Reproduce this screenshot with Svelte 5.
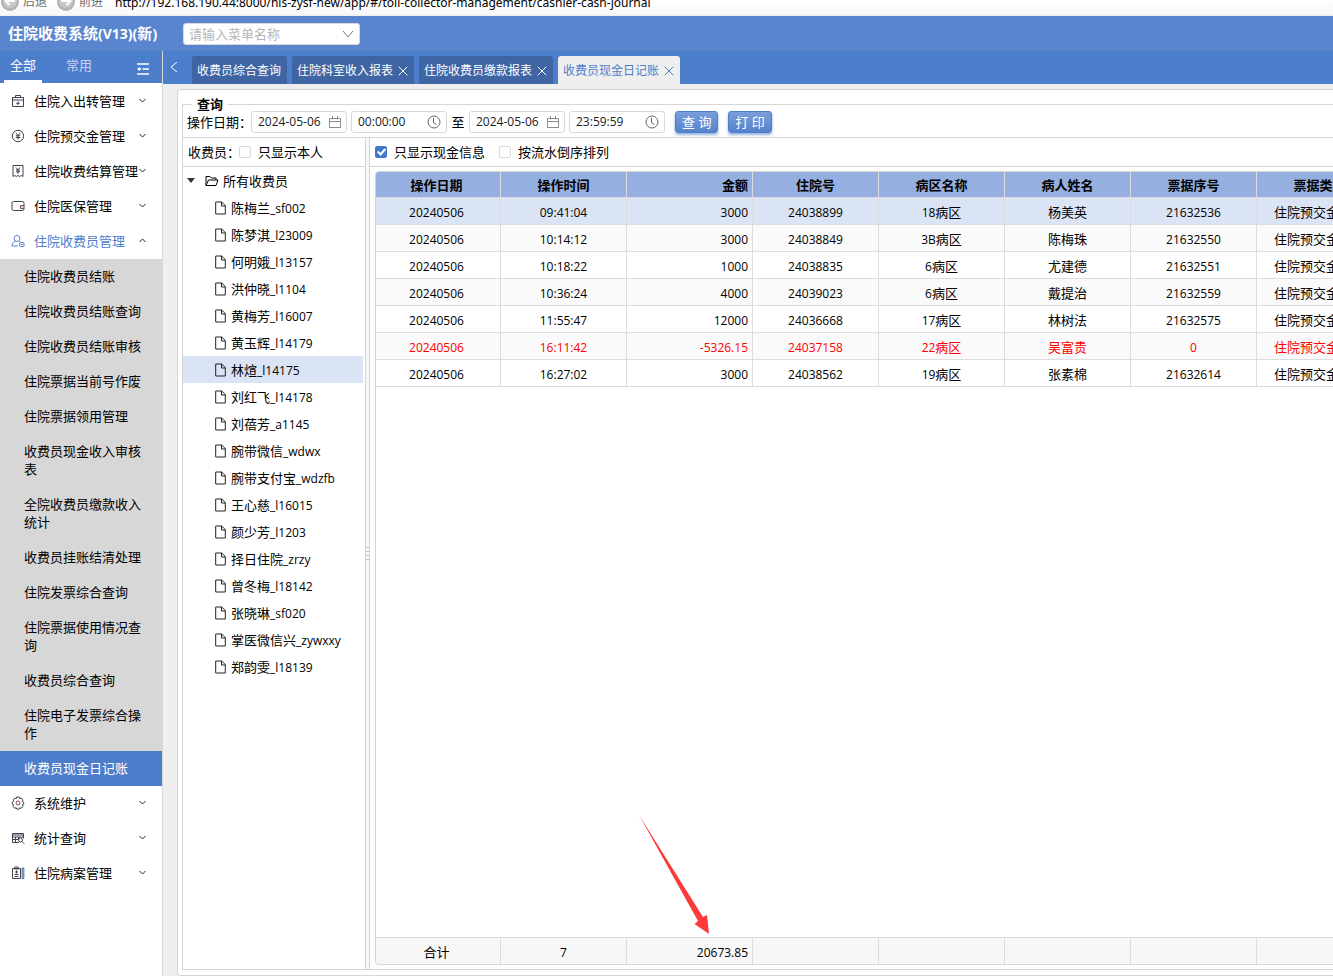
<script>
  const groups = [
    { icon: 'case', label: '住院入出转管理' },
    { icon: 'coin', label: '住院预交金管理' },
    { icon: 'receipt', label: '住院收费结算管理' },
    { icon: 'wallet', label: '住院医保管理' },
    {
      icon: 'user',
      label: '住院收费员管理',
      open: true,
      children: [
        '住院收费员结账',
        '住院收费员结账查询',
        '住院收费员结账审核',
        '住院票据当前号作废',
        '住院票据领用管理',
        '收费员现金收入审核表',
        '全院收费员缴款收入统计',
        '收费员挂账结清处理',
        '住院发票综合查询',
        '住院票据使用情况查询',
        '收费员综合查询',
        '住院电子发票综合操作',
        '收费员现金日记账'
      ]
    },
    { icon: 'gear', label: '系统维护' },
    { icon: 'stats', label: '统计查询' },
    { icon: 'record', label: '住院病案管理' }
  ];

  const tabs = [
    { label: '收费员综合查询', closable: false },
    { label: '住院科室收入报表', closable: true },
    { label: '住院收费员缴款报表', closable: true },
    { label: '收费员现金日记账', closable: true }
  ];

  const collectors = [
    '陈梅兰_sf002', '陈梦淇_l23009', '何明娥_l13157', '洪仲晓_l1104', '黄梅芳_l16007',
    '黄玉辉_l14179', '林煊_l14175', '刘红飞_l14178', '刘蓓芳_a1145', '腕带微信_wdwx',
    '腕带支付宝_wdzfb', '王心慈_l16015', '颜少芳_l1203', '择日住院_zrzy', '曾冬梅_l18142',
    '张晓琳_sf020', '掌医微信兴_zywxxy', '郑韵雯_l18139'
  ];

  const columns = ['操作日期', '操作时间', '金额', '住院号', '病区名称', '病人姓名', '票据序号', '票据类型'];
  const rows = [
    ['20240506', '09:41:04', '3000', '24038899', '18病区', '杨美英', '21632536', '住院预交金收据'],
    ['20240506', '10:14:12', '3000', '24038849', '3B病区', '陈梅珠', '21632550', '住院预交金收据'],
    ['20240506', '10:18:22', '1000', '24038835', '6病区', '尤建德', '21632551', '住院预交金收据'],
    ['20240506', '10:36:24', '4000', '24039023', '6病区', '戴提治', '21632559', '住院预交金收据'],
    ['20240506', '11:55:47', '12000', '24036668', '17病区', '林树法', '21632575', '住院预交金收据'],
    ['20240506', '16:11:42', '-5326.15', '24037158', '22病区', '吴富贵', '0', '住院预交金收据'],
    ['20240506', '16:27:02', '3000', '24038562', '19病区', '张素棉', '21632614', '住院预交金收据']
  ];
  const totals = ['合计', '7', '20673.85', '', '', '', '', ''];

  let activeItem = $state('收费员现金日记账');
  let activeTab = $state('收费员现金日记账');
  let selected = $state('林煊_l14175');
  let onlySelf = $state(false);
  let onlyCash = $state(true);
  let reverse = $state(false);

  // Separates Latin runs from Chinese runs so each gets its own size
  const runs = (text) => text.match(/[\x00-\x7f]+|[^\x00-\x7f]+/g) ?? [];
  const isLatin = (run) => run.charCodeAt(0) < 128;
</script>

{#snippet mixed(text)}{#each runs(text) as run}{#if isLatin(run)}<span class="latin">{run}</span>{:else}{run}{/if}{/each}{/snippet}

{#snippet calendar()}
  <svg class="field-icon" width="12" height="12" viewBox="0 0 12 12"><path d="M.5 2.5h11v9H.5zM.5 5.5h11M3.5 0v3.5M8.500 0v3.5" /></svg>
{/snippet}

{#snippet clock()}
  <svg class="field-icon dark" width="14" height="14" viewBox="0 0 14 14"><circle cx="7" cy="7" r="6" /><path d="M6.500 3v4.500l3 2" /></svg>
{/snippet}

{#snippet close()}
  <svg width="10" height="10" viewBox="0 0 10 10"><path d="M.7.7l8.600 8.600M9.300.7L.7 9.300" /></svg>
{/snippet}

{#snippet menuIcon(name)}
  <svg class="menu-icon" width="14" height="14" viewBox="0 0 14 14">
    {#if name === 'case'}
      <path d="M1.500 3.500h11v9h-11zM1.500 6h11M4.500 3.500v-2h5v2M7 7.500v3.500M5.300 9.300h3.400" />
    {:else if name === 'coin'}
      <circle cx="7" cy="7" r="5.700" /><path d="M4.800 4L7 6.500 9.200 4M4.800 6.800h4.400M4.800 8.500h4.400M7 6.500v4" />
    {:else if name === 'receipt'}
      <path d="M2 12.500V1.500h10v11l-1.700-1-1.600 1-1.700-1-1.700 1-1.600-1zM5 3.500l2 2.300 2-2.300M5 6h4M5 7.800h4M7 5.800v4" />
    {:else if name === 'wallet'}
      <rect x="1" y="2.500" width="12" height="9" rx="1.500" /><path class="warm" d="M13 6.500H9.500v3H13M10.500 8h1" />
    {:else if name === 'user'}
      <circle cx="6" cy="4.500" r="3" /><path d="M4.300 7.200C2 8 1.200 9.500 1 12h6M8 6.800l1.300 1" /><rect x="8.500" y="8.500" width="4.500" height="4" rx="1" /><path d="M9.500 10.500h2.500" />
    {:else if name === 'gear'}
      <path d="M5.700 1h2.600l.4 1.600 1.600-.5 1.700 1.900-.8 1.500 1.500.7v2l-1.500.7.8 1.500-1.800 1.900-1.500-.6-.5 1.400H5.700l-.5-1.400-1.500.6L2 10.400l.7-1.500-1.400-.7v-2l1.400-.7L2 4l1.700-1.900 1.600.5z" /><circle class="warm" cx="7" cy="7" r="2" />
    {:else if name === 'stats'}
      <path d="M8 11.500H1.500v-9h11v5M1.500 4h11M1.500 6h11M1.500 8.500H8M4.500 6v5.500M7.500 6v3" /><circle cx="9.500" cy="9" r="2" /><path d="M11 10.500l2.300 2.300" />
    {:else}
      <path d="M1.500 2.500h8v10h-8zM3.800 1h3.500v2H3.800zM5.500 4.500v3M4 6h3M3.500 8.500h4M3.500 10.500h4" /><path class="blue" d="M11.200 2h1.600v10.500h-1.600z" />
    {/if}
  </svg>
{/snippet}

<div class="app">
  <div class="browser">
    <svg width="20" height="12" viewBox="0 0 20 12"><circle cx="10" cy="2" r="9" fill="#b4b4b4" /><circle cx="10" cy="1" r="7" fill="#c9c9c9" /><path d="M15 1H6M9.500-3L5.500 1l4 4" fill="none" stroke="#fff" stroke-width="2" /></svg>
    <span class="nav-text">后退</span>
    <svg width="20" height="12" viewBox="0 0 20 12"><circle cx="10" cy="2" r="9" fill="#b4b4b4" /><circle cx="10" cy="1" r="7" fill="#c9c9c9" /><path d="M5 1h9M10.500-3l4 4-4 4" fill="none" stroke="#fff" stroke-width="2" /></svg>
    <span class="nav-text">前进</span>
    <span class="url">http://192.168.190.44:8000/his-zysf-new/app/#/toll-collector-management/cashier-cash-journal</span>
  </div>

  <header>
    <h1>{@render mixed('住院收费系统(V13)(新)')}</h1>
    <label class="search">
      <input type="text" placeholder="请输入菜单名称" aria-label="请输入菜单名称" />
      <svg width="12" height="8" viewBox="0 0 12 8"><path d="M1 1l5 6 5-6" /></svg>
    </label>
  </header>

  <div class="body">
    <aside>
      <div class="side-tabs">
        <button class="on">全部</button>
        <button>常用</button>
        <button class="fold" aria-label="折叠">
          <svg width="14" height="14" viewBox="0 0 14 14"><path d="M1 2h12M6.500 7H13M1 12h12M2 7h3" /><path class="tip" d="M1 7l3-2v4z" /></svg>
        </button>
      </div>
      <nav>
        {#each groups as group}
          <button class="group" class:open={group.open}>
            {@render menuIcon(group.icon)}
            <span>{group.label}</span>
            <svg class="chevron" width="7" height="5" viewBox="0 0 7 5"><path d={group.open ? 'M.5 4l3-3 3 3' : 'M.5 1l3 3 3-3'} /></svg>
          </button>
          {#if group.children}
            <div class="children">
              {#each group.children as child}
                <button class:active={child === activeItem} onclick={() => (activeItem = child)}>{child}</button>
              {/each}
            </div>
          {/if}
        {/each}
      </nav>
    </aside>

    <main>
      <div class="tabs">
        <button class="back" aria-label="向左"><svg width="8" height="10" viewBox="0 0 8 10"><path d="M7 0L1 5l6 5" /></svg></button>
        {#each tabs as tab}
          <button class="tab" class:current={tab.label === activeTab} onclick={() => (activeTab = tab.label)}>
            {tab.label}{#if tab.closable}{@render close()}{/if}
          </button>
        {/each}
      </div>

      <div class="panel">
        <div class="frame">
          <fieldset>
            <legend>查询</legend>
            <div class="query">
              <label for="from-date">操作日期：</label>
              <span class="field"><input id="from-date" type="text" value="2024-05-06" />{@render calendar()}</span>
              <span class="field"><input type="text" value="00:00:00" aria-label="开始时间" />{@render clock()}</span>
              <span class="to">至</span>
              <span class="field"><input type="text" value="2024-05-06" aria-label="结束日期" />{@render calendar()}</span>
              <span class="field"><input type="text" value="23:59:59" aria-label="结束时间" />{@render clock()}</span>
              <button class="action">查 询</button>
              <button class="action">打 印</button>
            </div>
          </fieldset>

          <div class="split">
            <section class="left">
              <div class="options">
                <span>收费员：</span>
                <label><input type="checkbox" bind:checked={onlySelf} />只显示本人</label>
              </div>
              <div class="tree">
                <div class="root">
                  <svg width="8" height="5" viewBox="0 0 8 5"><path d="M0 0h8L4 5z" fill="#333" /></svg>
                  <svg class="folder" width="14" height="12" viewBox="0 0 14 12"><path d="M1 10.500v-9h4l1.500 1.500H11v2M1 10.500L3.500 5H13l-2 5.500z" /></svg>
                  <span>所有收费员</span>
                </div>
                {#each collectors as name}
                  <button class="leaf" class:selected={name === selected} onclick={() => (selected = name)}>
                    <svg width="11" height="14" viewBox="0 0 11 14"><path d="M.7 1h6l3.600 3.600V13H.7zM6.500 1v4h4" /></svg>
                    <span>{@render mixed(name)}</span>
                  </button>
                {/each}
              </div>
            </section>

            <div class="splitter"><i></i><i></i><i></i><i></i></div>

            <section class="right">
              <div class="options">
                <label><input type="checkbox" bind:checked={onlyCash} />只显示现金信息</label>
                <label><input type="checkbox" bind:checked={reverse} />按流水倒序排列</label>
              </div>
              <div class="grid">
                <table>
                  <thead>
                    <tr>{#each columns as column, c}<th class:amount={c === 2}>{column}</th>{/each}</tr>
                  </thead>
                  <tbody>
                    {#each rows as row, r}
                      <tr class:picked={r === 0} class:negative={row[2].startsWith('-')}>
                        {#each row as cell, c}<td class:amount={c === 2}>{@render mixed(cell)}</td>{/each}
                      </tr>
                    {/each}
                  </tbody>
                </table>
                <table class="totals">
                  <tbody>
                    <tr>{#each totals as cell, c}<td class:amount={c === 2}>{@render mixed(cell)}</td>{/each}</tr>
                  </tbody>
                </table>
                <svg class="arrow" width="72" height="120" viewBox="0 0 72 120"><path d="M0 0L64 102 68 100 70 119 55.500 109 59 106z" fill="#fc3a3a" /></svg>
              </div>
            </section>
          </div>
        </div>
      </div>
    </main>
  </div>
</div>

<style>
  :global(body) {
    margin: 0;
    overflow: hidden;
  }
  .app {
    display: flex;
    flex-direction: column;
    height: 100vh;
    overflow: hidden;
    background: #efefef;
    color: #000;
    font: 13px/18px 'Open Sans', 'Noto Sans CJK SC', sans-serif;
  }
  .app * {
    box-sizing: border-box;
  }
  button {
    margin: 0;
    padding: 0;
    border: 0;
    background: none;
    color: inherit;
    font: inherit;
    text-align: left;
    cursor: pointer;
  }
  svg {
    flex: none;
    fill: none;
    stroke: currentColor;
  }
  .latin {
    font-size: 12px;
  }

  .browser {
    display: flex;
    flex: none;
    height: 16px;
    overflow: hidden;
    background: linear-gradient(#fff, #f7f7f7);
    border-bottom: 1px solid #efefef;
    white-space: nowrap;
  }
  .browser svg {
    stroke: none;
  }
  .nav-text {
    width: 36px;
    margin-top: -7px;
    padding-left: 3px;
    color: #6d6d6d;
    font-size: 12px;
  }
  .url {
    margin-top: -6px;
    padding-left: 3px;
    font-family: 'Noto Sans', sans-serif;
    font-size: 12px;
  }

  header {
    display: flex;
    flex: none;
    align-items: center;
    height: 35px;
    background: #5985cf;
  }
  h1 {
    width: 183px;
    margin: 0;
    padding-left: 8px;
    color: #fff;
    font-size: 15px;
    line-height: 18px;
    white-space: nowrap;
  }
  h1 .latin {
    font-size: 14px;
  }
  .search {
    display: flex;
    align-items: center;
    width: 177px;
    height: 22px;
    padding: 0 5px;
    background: #fff;
    border: 1px solid #d9d9d9;
    border-radius: 3px;
    color: #777;
  }
  .search input,
  .field input {
    flex: 1;
    min-width: 0;
    padding: 0;
    border: 0;
    outline: 0;
    background: none;
    color: #222;
    font: inherit;
  }
  .search input::placeholder {
    color: #b5b5b5;
    opacity: 1;
  }

  .body {
    display: flex;
    flex: 1;
    min-height: 0;
  }
  aside {
    flex: none;
    width: 163px;
    background: #fff;
    border-right: 1px solid #d9d9d9;
  }
  .side-tabs {
    display: flex;
    height: 32px;
    padding-left: 4px;
    background: #4d7ecc;
    color: #c3d3ee;
  }
  .side-tabs button {
    width: 38px;
    margin-right: 18px;
    padding-bottom: 2px;
    border-bottom: 3px solid transparent;
    text-align: center;
  }
  .side-tabs .on {
    border-color: #fff;
    color: #fff;
  }
  .side-tabs .fold {
    width: 14px;
    margin: 3px 0 0 20px;
    padding: 0;
    border: 0;
    color: #fff;
  }
  .fold svg {
    display: block;
    stroke-width: 1.5;
  }
  .tip {
    fill: #fff;
    stroke: none;
  }
  nav {
    padding-top: 1px;
  }
  .group {
    display: flex;
    align-items: center;
    width: 100%;
    height: 35px;
    padding: 0 16px 2px 11px;
  }
  .group span {
    flex: 1;
    padding-left: 9px;
    white-space: nowrap;
  }
  .group.open {
    color: #4d7ecc;
  }
  .menu-icon {
    color: #3c434e;
  }
  .open .menu-icon {
    color: #5b83c9;
  }
  .warm {
    stroke: #8a4a55;
  }
  .blue {
    stroke: #42659b;
  }
  .chevron {
    color: #222;
  }
  .children {
    background: #d7d7d7;
  }
  .children button {
    display: block;
    width: 100%;
    padding: 8px 16px 9px 24px;
  }
  .children .active {
    background: #4d7ecc;
    color: #fff;
  }

  main {
    display: flex;
    flex: 1;
    flex-direction: column;
    min-width: 0;
  }
  .tabs {
    display: flex;
    flex: none;
    gap: 5px;
    height: 33px;
    padding-top: 5px;
    background: #4d7ecc;
    color: #fff;
    font-size: 12px;
  }
  .back {
    width: 24px;
    padding: 0 0 4px 7px;
  }
  .tab {
    display: flex;
    gap: 5px;
    align-items: center;
    padding: 2px 6px 0 5px;
    background: #3f65a4;
    border-radius: 3px 3px 0 0;
    white-space: nowrap;
  }
  .tab.current {
    background: #efefef;
    color: #4d7ecc;
  }

  .panel {
    display: flex;
    flex: 1;
    min-height: 0;
    margin: 5px 0 0 14px;
    padding: 5px 0 5px 4px;
    background: #fff;
    border: 1px solid #d5d5d5;
    border-right: 0;
    border-radius: 4px 0 0 4px;
  }
  .frame {
    display: flex;
    flex: 1;
    flex-direction: column;
    min-width: 0;
  }
  fieldset {
    flex: none;
    min-width: 0;
    height: 42px;
    margin: 0;
    padding: 0;
    border: 1px solid #d5d5d5;
    border-width: 1px 0 0 1px;
  }
  legend {
    height: 18px;
    margin-left: 9px;
    padding: 0 5px;
    font-weight: bold;
  }
  .query {
    display: flex;
    gap: 4px;
    align-items: center;
    height: 22px;
    margin-top: -2px;
    padding-left: 4px;
    white-space: nowrap;
  }
  .query label {
    width: 60px;
  }
  .field {
    display: flex;
    align-items: center;
    width: 96px;
    height: 22px;
    padding: 0 5px 0 6px;
    border: 1px solid #d9d9d9;
    border-radius: 3px;
    font-size: 12px;
  }
  .field-icon {
    color: #8c8c8c;
  }
  .dark {
    color: #666;
  }
  .to {
    width: 14px;
    text-align: center;
  }
  .action {
    height: 22px;
    margin-left: 6px;
    padding: 0 6px;
    background: linear-gradient(#7b9edb, #5582cc);
    border: 1px solid #4d7ecc;
    border-radius: 3px;
    box-shadow: 0 2px 3px #4d7ecc99;
    color: #fff;
    line-height: 20px;
  }

  .split {
    display: flex;
    flex: 1;
    min-height: 0;
    border: 1px solid #d5d5d5;
    border-right: 0;
  }
  .left {
    flex: none;
    width: 182px;
  }
  .options {
    display: flex;
    flex: none;
    gap: 14px;
    align-items: center;
    height: 29px;
    padding-left: 5px;
    border-bottom: 1px solid #d5d5d5;
    white-space: nowrap;
  }
  .left .options {
    gap: 0;
  }
  .left .options span {
    width: 51px;
  }
  .options label {
    display: flex;
    gap: 7px;
    align-items: center;
  }
  input[type='checkbox'] {
    width: 12px;
    height: 12px;
    margin: 0;
    background: #fff;
    border: 1px solid #d9d9d9;
    border-radius: 2px;
    appearance: none;
  }
  input[type='checkbox']:checked {
    display: grid;
    place-items: center;
    background: #4179cc;
    border-color: #4179cc;
  }
  input[type='checkbox']:checked::after {
    box-sizing: border-box;
    width: 5px;
    height: 8px;
    margin-bottom: 2px;
    border: solid #fff;
    border-width: 0 2px 2px 0;
    transform: rotate(42deg);
    content: '';
  }
  .tree {
    padding-right: 2px;
  }
  .root,
  .leaf {
    display: flex;
    align-items: center;
    width: 100%;
    height: 27px;
    white-space: nowrap;
  }
  .root {
    gap: 4px;
    padding-left: 4px;
  }
  .root svg:first-child {
    stroke: none;
  }
  .folder {
    margin-left: 6px;
  }
  .leaf {
    gap: 5px;
    padding-left: 32px;
  }
  .leaf svg {
    color: #222;
  }
  .leaf span {
    padding-top: 2px;
  }
  .selected {
    background: #dbe4f5;
  }
  .splitter {
    display: flex;
    flex: none;
    flex-direction: column;
    gap: 3px;
    justify-content: center;
    width: 5px;
    background: #f7f7f7;
    border: 1px solid #d5d5d5;
    border-width: 0 1px;
  }
  .splitter i {
    height: 1px;
    background: #c5c5c5;
  }
  .right {
    display: flex;
    flex: 1;
    flex-direction: column;
    min-width: 0;
  }
  .grid {
    position: relative;
    display: flex;
    flex: 1;
    flex-direction: column;
    justify-content: space-between;
    min-height: 0;
    margin: 4px 0 4px 5px;
    overflow: hidden;
    border: 1px solid #d5d5d5;
    border-right: 0;
    border-radius: 4px 0 0 4px;
  }
  table {
    width: 1007px;
    border-collapse: separate;
    border-spacing: 0;
    table-layout: fixed;
  }
  th,
  td {
    height: 27px;
    padding: 2px 4px 0;
    overflow: hidden;
    border: 1px solid #dcdcdc;
    border-width: 0 1px 1px 0;
    text-align: center;
    white-space: nowrap;
  }
  th {
    height: 26px;
    padding-top: 0;
    background: #95b0e0;
  }
  th:first-child,
  td:first-child {
    width: 125px;
    padding-right: 7px;
  }
  .amount {
    text-align: right;
  }
  tbody tr:nth-child(even) {
    background: #fafafa;
  }
  tbody .picked {
    background: #dbe4f5;
  }
  .negative {
    color: #f00;
  }
  .totals td {
    background: #f7f7f7;
    border-width: 1px 1px 0 0;
  }
  .arrow {
    position: absolute;
    bottom: 29px;
    left: 263px;
    stroke: none;
  }
</style>
